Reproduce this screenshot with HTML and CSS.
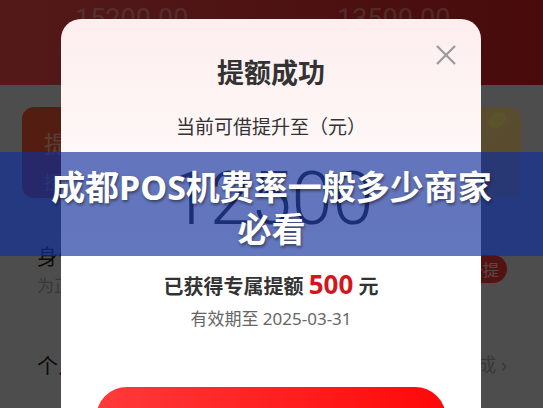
FILE: index.html
```html
<!DOCTYPE html>
<html lang="zh-CN">
  <head>
    <meta charset="UTF-8" />
    <meta name="viewport" content="width=device-width, initial-scale=1.0" />
    <title>提额成功</title>
    <link rel="stylesheet" href="styles.css">
  </head>
  <body>
    <div class="page">
      <div class="header">
        <div class="amounts">
          <span>15200.00</span>
          <span>13500.00</span>
        </div>
      </div>

      <div class="cards">
        <div class="card card-red">
          <p class="card-title">提升额度</p>
          <p class="card-sub">授信提额</p>
        </div>
        <div class="card card-yellow">
          <span class="blob"></span>
        </div>
      </div>

      <div class="row">
        <div>
          <p class="row-title">身份认证</p>
          <p class="row-sub">为正常使用额度请完成认证</p>
        </div>
        <span class="pill">去提</span>
      </div>

      <div class="row row-second">
        <p class="row-title">个人信息</p>
        <span class="row-link">去完成 ›</span>
      </div>
    </div>

    <div class="mask"></div>

    <div class="dialog">
      <svg class="close" width="22" height="22" viewBox="0 0 22 22">
        <path d="M2 2 L20 20 M20 2 L2 20" stroke="#9a9a9a" stroke-width="2.2" fill="none" />
      </svg>
      <h2 class="dialog-title">提额成功</h2>
      <p class="dialog-sub">当前可借提升至（元）</p>
      <p class="dialog-amount">12500</p>
      <p class="dialog-gain">已获得专属提额 <span class="gain-num">500</span> 元</p>
      <p class="dialog-date">有效期至 2025-03-31</p>
      <button class="dialog-btn">立即借款</button>
    </div>

    <div class="banner">
      <h1>成都POS机费率一般多少商家必看</h1>
    </div>
  </body>
</html>
```

FILE: styles.css
```css
body {
  margin: 0;
  width: 543px;
  height: 408px;
  overflow: hidden;
  position: relative;
  font-family: "Noto Sans", "Noto Sans CJK SC", sans-serif;
  background-color: #d2d2d2;
  color: #333;
}
p {
  margin: 0;
}
.header {
  height: 85px;
  background: linear-gradient(90deg, #e24545, #c41f1f);
}
.amounts {
  display: grid;
  grid-template-columns: 262px auto;
  padding: 3px 0 0 75px;
  font-family: Roboto, sans-serif;
  font-size: 27px;
  color: rgba(255, 255, 255, 0.35);
}
.cards {
  display: flex;
  justify-content: space-between;
  padding: 22px 22px 0;
}
.card {
  width: 220px;
  height: 91px;
  border-radius: 12px;
}
.card-red {
  background-color: #e0522f;
  padding: 18px 0 0 22px;
  box-sizing: border-box;
  color: rgba(255, 255, 255, 0.5);
}
.card-title {
  font-size: 24px;
}
.card-sub {
  font-size: 18px;
  margin-top: 8px;
}
.card-yellow {
  width: 200px;
  background: linear-gradient(135deg, #f4d890, #eec878);
  position: relative;
  overflow: hidden;
}
.blob {
  position: absolute;
  right: 14px;
  top: 6px;
  width: 20px;
  height: 14px;
  border-radius: 50%;
  background-color: #f6e070;
  transform: rotate(-35deg);
}
.row {
  display: flex;
  justify-content: space-between;
  align-items: center;
  padding: 42px 36px 0 37px;
}
.row-title {
  font-size: 21px;
  color: #222;
}
.row-sub {
  font-size: 17px;
  color: #999;
  margin-top: 2px;
}
.pill {
  background-color: #e53535;
  color: rgba(255, 255, 255, 0.7);
  font-size: 16px;
  padding: 2px 8px 2px 14px;
  border-radius: 14px;
}
.row-second {
  padding-top: 52px;
}
.row-link {
  font-size: 19px;
  color: #999;
}
.mask {
  position: absolute;
  inset: 0;
  background-color: rgba(0, 0, 0, 0.63);
}
.dialog {
  position: absolute;
  left: 61px;
  top: 19px;
  width: 420px;
  height: 440px;
  border-radius: 20px;
  background: linear-gradient(180deg, #fdeeee 0, #fff 240px);
  text-align: center;
  padding-top: 35px;
  box-sizing: border-box;
}
.close {
  position: absolute;
  right: 24px;
  top: 25px;
}
.dialog-title {
  margin: 0;
  font-size: 27px;
  line-height: 38px;
  font-weight: bold;
  color: #333;
}
.dialog-sub {
  margin-top: 21px;
  font-size: 19px;
  line-height: 28px;
  color: #333;
}
.dialog-amount {
  margin-top: 17px;
  font-family: Roboto, sans-serif;
  font-weight: 300;
  font-size: 74px;
  line-height: 82px;
  color: #333;
}
.dialog-gain {
  margin-top: 29px;
  font-size: 20px;
  line-height: 30px;
  font-weight: bold;
  color: #333;
}
.gain-num {
  font-size: 26px;
  color: #d4161c;
}
.dialog-date {
  margin-top: 2px;
  font-size: 17px;
  line-height: 30px;
  color: #666;
}
.dialog-btn {
  display: block;
  margin: 53px auto 0;
  width: 350px;
  height: 62px;
  border: none;
  border-radius: 31px;
  background: linear-gradient(90deg, #ff3a3a, #ff0808);
  color: #fff;
  font-size: 22px;
  font-family: inherit;
}
.banner {
  position: absolute;
  left: 0;
  right: 0;
  top: 152px;
  height: 104px;
  background-color: rgba(15, 46, 155, 0.65);
  display: flex;
  align-items: center;
  justify-content: center;
  padding: 0 40px;
  box-sizing: border-box;
}
.banner h1 {
  margin: 8px 0 0;
  font-size: 34px;
  line-height: 42px;
  font-weight: bold;
  color: #fff;
  text-align: center;
  text-shadow: 1px 2px 3px rgba(0, 0, 0, 0.45);
}
```
